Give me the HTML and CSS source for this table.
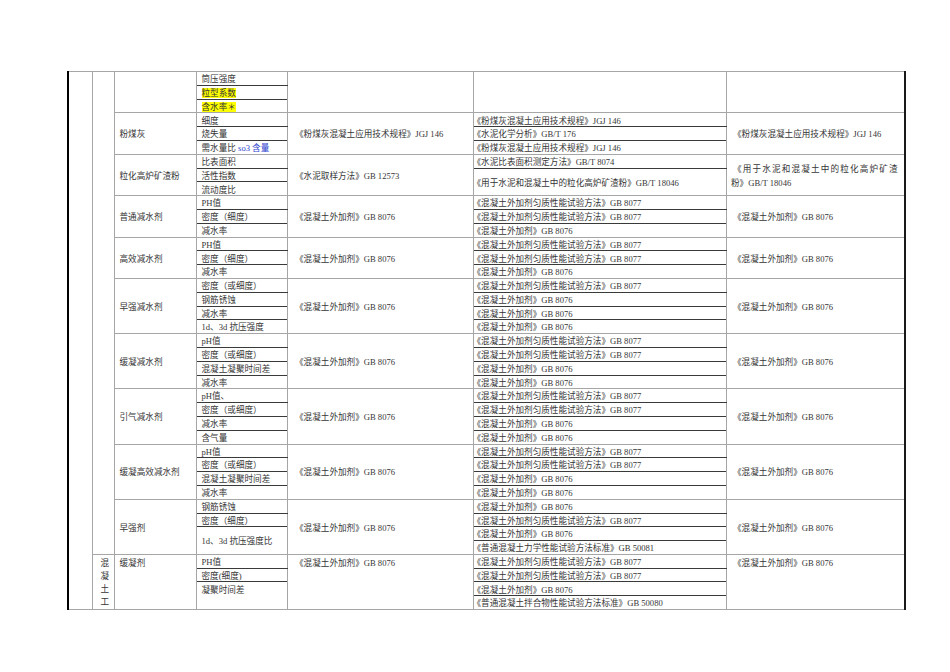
FILE: index.html
```html
<!DOCTYPE html>
<html lang="zh-CN">
<head>
<meta charset="utf-8">
<title>检测项目表</title>
<link rel="stylesheet" href="styles.css">
</head>
<body>
<div class="page">
<table class="sheet">
<colgroup>
<col class="w1"><col class="w2"><col class="w3"><col class="w4"><col class="w5"><col class="w6"><col class="w7">
</colgroup>
<tbody>
<!-- G0 -->
<tr>
<td class="c1" rowspan="39"></td>
<td class="c2" rowspan="35"></td>
<td class="c3" rowspan="3"></td>
<td class="c4 it">筒压强度</td>
<td class="c5" rowspan="3"></td>
<td class="c6" rowspan="3"></td>
<td class="c7" rowspan="3"></td>
</tr>
<tr><td class="c4 it"><span class="hl">粒型系数</span></td></tr>
<tr><td class="c4"><span class="hl">含水率＊</span></td></tr>
<!-- G1 粉煤灰 -->
<tr>
<td class="c3" rowspan="3">粉煤灰</td>
<td class="c4 it">细度</td>
<td class="c5" rowspan="3">《粉煤灰混凝土应用技术规程》JGJ 146</td>
<td class="c6 it">《粉煤灰混凝土应用技术规程》JGJ 146</td>
<td class="c7" rowspan="3">《粉煤灰混凝土应用技术规程》JGJ 146</td>
</tr>
<tr><td class="c4 it">烧失量</td><td class="c6 it">《水泥化学分析》GB/T 176</td></tr>
<tr><td class="c4">需水量比 <span class="blue">so3 含量</span></td><td class="c6">《粉煤灰混凝土应用技术规程》JGJ 146</td></tr>
<!-- G2 粒化高炉矿渣粉 -->
<tr>
<td class="c3" rowspan="3">粒化高炉矿渣粉</td>
<td class="c4 it">比表面积</td>
<td class="c5" rowspan="3">《水泥取样方法》GB 12573</td>
<td class="c6 it">《水泥比表面积测定方法》GB/T 8074</td>
<td class="c7 just" rowspan="3"><span class="jl">《用于水泥和混凝土中的粒化高炉矿渣</span>粉》GB/T 18046</td>
</tr>
<tr><td class="c4 it">活性指数</td><td class="c6" rowspan="2">《用于水泥和混凝土中的粒化高炉矿渣粉》GB/T 18046</td></tr>
<tr><td class="c4">流动度比</td></tr>
<!-- G3 普通减水剂 -->
<tr>
<td class="c3" rowspan="3">普通减水剂</td>
<td class="c4 it">PH值</td>
<td class="c5" rowspan="3">《混凝土外加剂》GB 8076</td>
<td class="c6 it">《混凝土外加剂匀质性能试验方法》GB 8077</td>
<td class="c7" rowspan="3">《混凝土外加剂》GB 8076</td>
</tr>
<tr><td class="c4 it">密度（细度）</td><td class="c6 it">《混凝土外加剂匀质性能试验方法》GB 8077</td></tr>
<tr><td class="c4">减水率</td><td class="c6">《混凝土外加剂》GB 8076</td></tr>
<!-- G4 高效减水剂 -->
<tr>
<td class="c3" rowspan="3">高效减水剂</td>
<td class="c4 it">PH值</td>
<td class="c5" rowspan="3">《混凝土外加剂》GB 8076</td>
<td class="c6 it">《混凝土外加剂匀质性能试验方法》GB 8077</td>
<td class="c7" rowspan="3">《混凝土外加剂》GB 8076</td>
</tr>
<tr><td class="c4 it">密度（细度）</td><td class="c6 it">《混凝土外加剂匀质性能试验方法》GB 8077</td></tr>
<tr><td class="c4">减水率</td><td class="c6">《混凝土外加剂》GB 8076</td></tr>
<!-- G5 早强减水剂 -->
<tr>
<td class="c3" rowspan="4">早强减水剂</td>
<td class="c4 it">密度（或细度）</td>
<td class="c5" rowspan="4">《混凝土外加剂》GB 8076</td>
<td class="c6 it">《混凝土外加剂匀质性能试验方法》GB 8077</td>
<td class="c7" rowspan="4">《混凝土外加剂》GB 8076</td>
</tr>
<tr><td class="c4 it">钢筋锈蚀</td><td class="c6 it">《混凝土外加剂》GB 8076</td></tr>
<tr><td class="c4 it">减水率</td><td class="c6 it">《混凝土外加剂》GB 8076</td></tr>
<tr><td class="c4">1d、3d 抗压强度</td><td class="c6">《混凝土外加剂》GB 8076</td></tr>
<!-- G6 缓凝减水剂 -->
<tr>
<td class="c3" rowspan="4">缓凝减水剂</td>
<td class="c4 it">pH值</td>
<td class="c5" rowspan="4">《混凝土外加剂》GB 8076</td>
<td class="c6 it">《混凝土外加剂匀质性能试验方法》GB 8077</td>
<td class="c7" rowspan="4">《混凝土外加剂》GB 8076</td>
</tr>
<tr><td class="c4 it">密度（或细度）</td><td class="c6 it">《混凝土外加剂匀质性能试验方法》GB 8077</td></tr>
<tr><td class="c4 it">混凝土凝聚时间差</td><td class="c6 it">《混凝土外加剂》GB 8076</td></tr>
<tr><td class="c4">减水率</td><td class="c6">《混凝土外加剂》GB 8076</td></tr>
<!-- G7 引气减水剂 -->
<tr>
<td class="c3" rowspan="4">引气减水剂</td>
<td class="c4 it">pH值、</td>
<td class="c5" rowspan="4">《混凝土外加剂》GB 8076</td>
<td class="c6 it">《混凝土外加剂匀质性能试验方法》GB 8077</td>
<td class="c7" rowspan="4">《混凝土外加剂》GB 8076</td>
</tr>
<tr><td class="c4 it">密度（或细度）</td><td class="c6 it">《混凝土外加剂匀质性能试验方法》GB 8077</td></tr>
<tr><td class="c4 it">减水率</td><td class="c6 it">《混凝土外加剂》GB 8076</td></tr>
<tr><td class="c4">含气量</td><td class="c6">《混凝土外加剂》GB 8076</td></tr>
<!-- G8 缓凝高效减水剂 -->
<tr>
<td class="c3" rowspan="4">缓凝高效减水剂</td>
<td class="c4 it">pH值</td>
<td class="c5" rowspan="4">《混凝土外加剂》GB 8076</td>
<td class="c6 it">《混凝土外加剂匀质性能试验方法》GB 8077</td>
<td class="c7" rowspan="4">《混凝土外加剂》GB 8076</td>
</tr>
<tr><td class="c4 it">密度（或细度）</td><td class="c6 it">《混凝土外加剂匀质性能试验方法》GB 8077</td></tr>
<tr><td class="c4 it">混凝土凝聚时间差</td><td class="c6 it">《混凝土外加剂》GB 8076</td></tr>
<tr><td class="c4">减水率</td><td class="c6">《混凝土外加剂》GB 8076</td></tr>
<!-- G9 早强剂 -->
<tr>
<td class="c3" rowspan="4">早强剂</td>
<td class="c4 it">钢筋锈蚀</td>
<td class="c5" rowspan="4">《混凝土外加剂》GB 8076</td>
<td class="c6 it">《混凝土外加剂》GB 8076</td>
<td class="c7" rowspan="4">《混凝土外加剂》GB 8076</td>
</tr>
<tr><td class="c4 it">密度（细度）</td><td class="c6 it">《混凝土外加剂匀质性能试验方法》GB 8077</td></tr>
<tr><td class="c4" rowspan="2">1d、3d 抗压强度比</td><td class="c6 it">《混凝土外加剂》GB 8076</td></tr>
<tr><td class="c6">《普通混凝土力学性能试验方法标准》GB 50081</td></tr>
<!-- G10 缓凝剂 -->
<tr class="top">
<td class="c2 vert" rowspan="4">混凝土工</td>
<td class="c3" rowspan="4">缓凝剂</td>
<td class="c4 it">PH值</td>
<td class="c5" rowspan="4">《混凝土外加剂》GB 8076</td>
<td class="c6 it">《混凝土外加剂匀质性能试验方法》GB 8077</td>
<td class="c7" rowspan="4">《混凝土外加剂》GB 8076</td>
</tr>
<tr class="top"><td class="c4 it">密度(细度)</td><td class="c6 it">《混凝土外加剂匀质性能试验方法》GB 8077</td></tr>
<tr class="top"><td class="c4" rowspan="2">凝聚时间差</td><td class="c6 it">《混凝土外加剂》GB 8076</td></tr>
<tr class="top"><td class="c6">《普通混凝土拌合物性能试验方法标准》GB 50080</td></tr>
</tbody>
</table>
</div>
</body>
</html>
```

FILE: styles.css
```css
html, body {
  margin: 0;
  padding: 0;
  background: #ffffff;
}

.page {
  padding: 71px 0 0 67px;
}

.sheet {
  border-collapse: collapse;
  table-layout: fixed;
  width: 837px;
  font-family: "Liberation Serif", "Noto Sans CJK SC", serif;
  font-size: 8.6px;
  color: #363636;
  border-top: 1px solid #9a9a9a;
  border-left: 2px solid #000000;
  border-right: 2px solid #1a1a1a;
  border-bottom: 1px solid #7a7a7a;
}

.w1 { width: 24px; }
.w2 { width: 22px; }
.w3 { width: 82px; }
.w4 { width: 91.5px; }
.w5 { width: 185.5px; }
.w6 { width: 253.5px; }
.w7 { width: 178px; }

.sheet tr {
  height: 13.8px;
}

.sheet td {
  border: 1px solid #a6a6a6;
  padding: 3px 4px 0 5px;
  line-height: 9.5px;
  vertical-align: middle;
  white-space: nowrap;
  overflow: hidden;
}

.sheet td.it {
  border-bottom: 1px solid #3a3a3a;
}

.c3 { padding-left: 6px; }
.c4 { padding-left: 6px; }
.c5 { text-indent: 2px; }
.c6 { text-indent: -7px; }
.c7 { text-indent: 1px; }

.sheet td.just {
  white-space: normal;
  text-indent: 0;
  padding-left: 4px;
  padding-right: 6px;
  line-height: 14px;
}

.jl {
  display: block;
  text-align: justify;
  text-align-last: justify;
  text-indent: 2px;
}

.sheet td.vert {
  white-space: normal;
  padding: 2px 5px 0 8px;
  line-height: 13px;
  word-break: break-all;
}

.top td {
  vertical-align: top;
}

.top td.c6,
.top td.c4 {
  vertical-align: middle;
}

.top td.c4[rowspan] {
  vertical-align: top;
  padding-top: 4px;
}

.top td.c3,
.top td.c5,
.top td.c7 {
  padding-top: 4px;
}

.hl {
  background: #ffff00;
}

.blue {
  color: #2d3fd0;
}
```
